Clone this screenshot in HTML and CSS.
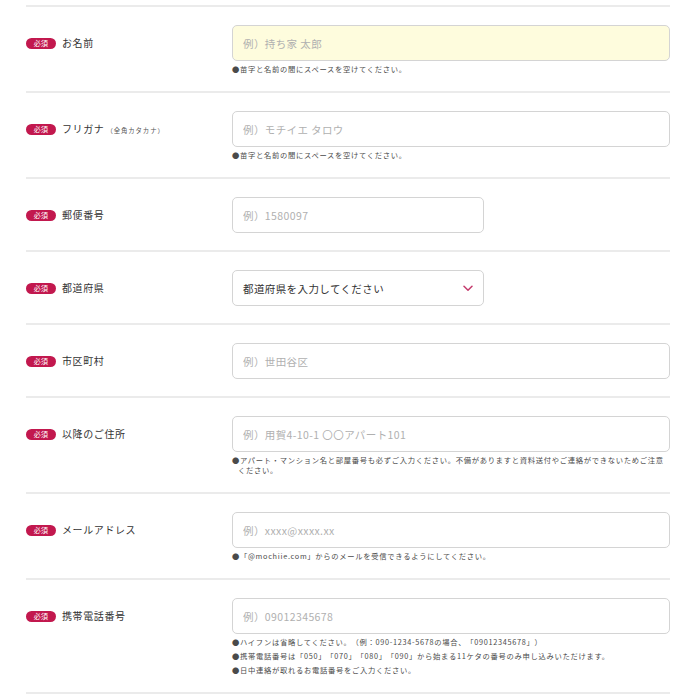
FILE: index.html
```html
<!DOCTYPE html>
<html lang="ja">
<head>
<meta charset="utf-8">
<link rel="stylesheet" href="styles.css">
</head>
<body>
<div class="form">
  <div class="row">
    <div class="label"><span class="req">必須</span><span class="name">お名前</span></div>
    <div class="field">
      <input class="input input-filled" type="text" placeholder="例）持ち家 太郎">
      <p class="note">●苗字と名前の間にスペースを空けてください。</p>
    </div>
  </div>
  <div class="row">
    <div class="label"><span class="req">必須</span><span class="name">フリガナ<small class="sub">（全角カタカナ）</small></span></div>
    <div class="field">
      <input class="input" type="text" placeholder="例）モチイエ タロウ">
      <p class="note">●苗字と名前の間にスペースを空けてください。</p>
    </div>
  </div>
  <div class="row">
    <div class="label"><span class="req">必須</span><span class="name">郵便番号</span></div>
    <div class="field">
      <input class="input input-half" type="text" placeholder="例）1580097">
    </div>
  </div>
  <div class="row">
    <div class="label"><span class="req">必須</span><span class="name">都道府県</span></div>
    <div class="field">
      <div class="select">
        <span>都道府県を入力してください</span>
        <svg class="chev" width="10" height="7" viewBox="0 0 10 7"><path d="M1 1.2 L5 5.2 L9 1.2" fill="none" stroke="#c43a6c" stroke-width="1.5" stroke-linecap="round" stroke-linejoin="round"/></svg>
      </div>
    </div>
  </div>
  <div class="row">
    <div class="label"><span class="req">必須</span><span class="name">市区町村</span></div>
    <div class="field">
      <input class="input" type="text" placeholder="例）世田谷区">
    </div>
  </div>
  <div class="row">
    <div class="label"><span class="req">必須</span><span class="name">以降のご住所</span></div>
    <div class="field">
      <input class="input" type="text" placeholder="例）用賀4-10-1 〇〇アパート101">
      <p class="note">●アパート・マンション名と部屋番号も必ずご入力ください。不備がありますと資料送付やご連絡ができないためご注意ください。</p>
    </div>
  </div>
  <div class="row">
    <div class="label"><span class="req">必須</span><span class="name">メールアドレス</span></div>
    <div class="field">
      <input class="input" type="text" placeholder="例）xxxx@xxxx.xx">
      <p class="note">●「@mochiie.com」からのメールを受信できるようにしてください。</p>
    </div>
  </div>
  <div class="row">
    <div class="label"><span class="req">必須</span><span class="name">携帯電話番号</span></div>
    <div class="field">
      <input class="input" type="text" placeholder="例）09012345678">
      <p class="note">●ハイフンは省略してください。（例：090-1234-5678の場合、「09012345678」）</p>
      <p class="note">●携帯電話番号は「050」「070」「080」「090」から始まる11ケタの番号のみ申し込みいただけます。</p>
      <p class="note">●日中連絡が取れるお電話番号をご入力ください。</p>
    </div>
  </div>
</div>
</body>
</html>
```

FILE: styles.css
```css
html, body {
  margin: 0;
  padding: 0;
  background: #ffffff;
}
body {
  font-family: "Noto Sans CJK JP", "Noto Sans", sans-serif;
  color: #333333;
  text-spacing-trim: space-all;
}
.form {
  margin: 5px 30px 0 26px;
  border-top: 2px solid #ebebeb;
}
.row {
  display: flex;
  align-items: flex-start;
  padding: 18px 0 17px;
  border-bottom: 2px solid #ebebeb;
}
.label {
  width: 206px;
  flex: none;
  height: 36px;
  display: flex;
  align-items: center;
  gap: 6px;
}
.req {
  display: inline-flex;
  align-items: center;
  justify-content: center;
  width: 30px;
  height: 11px;
  border-radius: 6px;
  background: #c2184e;
  color: #ffffff;
  font-size: 7px;
  line-height: 1;
  letter-spacing: 0.2px;
}
.name {
  font-size: 10px;
  letter-spacing: 0.6px;
  color: #333333;
  line-height: 1;
}
.sub {
  font-size: 6.4px;
  letter-spacing: 0.9px;
  color: #555555;
  margin-left: 2px;
}
.field {
  flex: 1;
  min-width: 0;
}
.input {
  display: block;
  box-sizing: border-box;
  width: 100%;
  height: 36px;
  margin: 0;
  padding: 0 10px;
  border: 1px solid #d4d4d4;
  border-radius: 5px;
  background: #ffffff;
  font-family: "Noto Sans CJK JP", "Noto Sans", sans-serif;
  font-size: 10.5px;
  letter-spacing: 0.4px;
  color: #333333;
  outline: none;
  text-spacing-trim: space-all;
}
.input::placeholder {
  color: #b0b0b0;
}
.input-filled {
  background: #fefcdd;
}
.input-half {
  width: 252px;
}
.select {
  box-sizing: border-box;
  width: 252px;
  height: 36px;
  padding: 0 10px;
  border: 1px solid #d4d4d4;
  border-radius: 5px;
  display: flex;
  align-items: center;
  justify-content: space-between;
  font-size: 10.5px;
  letter-spacing: 0.4px;
  color: #333333;
}
.chev {
  display: block;
  margin-top: 1px;
}
.note {
  margin: 3px 0 0;
  padding-left: 6px;
  text-indent: -6px;
  font-size: 7.3px;
  line-height: 10px;
  letter-spacing: 0.7px;
  color: #4a4a4a;
}
.note + .note {
  margin-top: 4px;
}
```
